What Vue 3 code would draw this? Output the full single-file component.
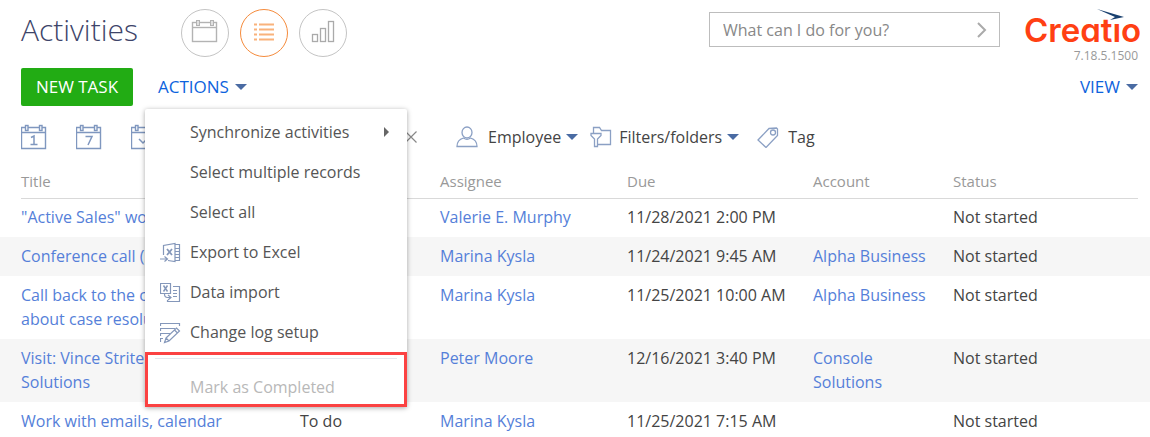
<script setup>
const columns = [
  { label: 'Title', cls: 'c-title' },
  { label: '', cls: 'c-type' },
  { label: 'Assignee', cls: 'c-owner' },
  { label: 'Due', cls: 'c-due' },
  { label: 'Account', cls: 'c-account' },
  { label: 'Status', cls: 'c-status' },
]
const rows = [
  { title: '"Active Sales" workshop', type: '', owner: 'Valerie E. Murphy', due: '11/28/2021 2:00 PM', account: '', status: 'Not started' },
  { title: 'Conference call (Skype)', type: '', owner: 'Marina Kysla', due: '11/24/2021 9:45 AM', account: 'Alpha Business', status: 'Not started' },
  { title: 'Call back to the customer about case resolution', type: '', owner: 'Marina Kysla', due: '11/25/2021 10:00 AM', account: 'Alpha Business', status: 'Not started' },
  { title: 'Visit: Vince Striter, Console Solutions', type: '', owner: 'Peter Moore', due: '12/16/2021 3:40 PM', account: 'Console Solutions', status: 'Not started' },
  { title: 'Work with emails, calendar', type: 'To do', owner: 'Marina Kysla', due: '11/25/2021 7:15 AM', account: '', status: 'Not started' },
]
</script>

<template>
  <div class="page">
    <header class="top">
      <h1>Activities</h1>
      <nav class="modes">
        <button class="mode" aria-label="Calendar">
          <svg width="46" height="46" viewBox="0 0 46 46" fill="none" stroke="#b3b3b3">
            <rect x="10.5" y="12.5" width="24" height="19" stroke-width="1.4" />
            <path d="M10.5 17.5h24" stroke-width="1.4" />
            <rect x="14.5" y="10.5" width="3" height="5" fill="#e0e0e0" />
            <rect x="28.5" y="10.5" width="3" height="5" fill="#e0e0e0" />
          </svg>
        </button>
        <button class="mode active" aria-label="List">
          <svg width="46" height="46" viewBox="0 0 46 46" stroke="#f9b27b" stroke-width="2">
            <path d="M13 14.5h3M18 14.5h15M13 19.5h3M18 19.5h15M13 24.5h3M18 24.5h15M13 29.5h3M18 29.5h15" />
          </svg>
        </button>
        <button class="mode" aria-label="Analytics">
          <svg width="46" height="46" viewBox="0 0 46 46" fill="none" stroke="#aaa" stroke-width="1.3">
            <rect x="12.5" y="24.5" width="5" height="7" />
            <rect x="20.5" y="18.5" width="5" height="13" />
            <rect x="28.5" y="11.5" width="5" height="20" />
          </svg>
        </button>
      </nav>
      <form class="command" @submit.prevent>
        <input type="text" aria-label="Command line" placeholder="What can I do for you?" />
        <button aria-label="Run">
          <svg width="12" height="16" viewBox="0 0 12 16" fill="none" stroke="#aaa" stroke-width="2"><path d="M2 1l7 7-7 7" /></svg>
        </button>
      </form>
      <div class="brand">
        <div class="logo">Creatio
          <svg class="bird" width="30" height="14" viewBox="0 0 30 14">
            <path d="M15 8h9v5h-9z" fill="#fff" />
            <path d="M1 0L28 8 14 11 19 8z" fill="#19406f" />
          </svg>
        </div>
        <div class="version">7.18.5.1500</div>
      </div>
    </header>

    <div class="commands">
      <button class="new">NEW TASK</button>
      <div class="menu-wrap">
        <button class="link-btn">ACTIONS <i class="caret"></i></button>
        <ul class="menu">
          <li><button>Synchronize activities <i class="sub"></i></button></li>
          <li><button>Select multiple records</button></li>
          <li><button>Select all</button></li>
          <li><button>
            <svg class="ico" width="22" height="22" viewBox="0 0 22 22" fill="none" stroke="#8497ba" stroke-width="1.2">
              <path d="M3.500 13V3.500L15 1.500v18L8 18.500M15 2.500h4.500v16H15M15 6.500h4M15 9.500h4M15 12.500h4M15 15.500h4M0 17h7M4.500 14.500L7.500 17l-3 2.500" />
              <path d="M7 7l5 6M12 7l-5 6" stroke-width="1.800" />
            </svg>Export to Excel</button></li>
          <li><button>
            <svg class="ico" width="22" height="22" viewBox="0 0 22 22" fill="none" stroke="#8497ba" stroke-width="1.2">
              <path d="M.5 1.500h10v10H.5zM13 4.500h6.500v15h-12V18M13 8.500h4M13 11.500h4M13 14.500h4M4.500 12c0 2.500 1 3.500 3 3.500h3M8 13l3 2.500L8 18" />
              <path d="M3.500 3.500l4 6M7.500 3.500l-4 6" stroke-width="1.500" />
            </svg>Data import</button></li>
          <li><button>
            <svg class="ico" width="22" height="22" viewBox="0 0 22 22" fill="none" stroke="#8497ba" stroke-width="1.2">
              <path d="M.5 4V1.500h19V4M.5 9V6.500H15M.5 14v-2.500H10M.5 20v-3.500H3M6 16L16.500 6l3 3L9 19 4.500 20.500zM6 16l3 3M14.500 8l3 3" />
            </svg>Change log setup</button></li>
          <li class="marked"><hr /><button disabled>Mark as Completed</button></li>
        </ul>
      </div>
      <button class="link-btn view">VIEW <i class="caret"></i></button>
    </div>

    <div class="filters">
      <button v-for="d in ['1', '7', 'v']" :key="d" class="day" :aria-label="d === 'v' ? 'Period' : d">
        <svg width="26" height="26" viewBox="0 0 26 26" fill="none" stroke="#7f97bf" stroke-width="1.4">
          <path d="M4 3.500H.5v21h24v-21H21M7 3.500h11M.5 8.500h24" />
          <rect x="4.500" y="1.500" width="2.500" height="5" /><rect x="18.500" y="1.500" width="2.500" height="5" />
          <path v-if="d === '1'" d="M10 13.500l3-1.500v8.500M9.500 20.500h7" stroke-width="1.500" />
          <path v-else-if="d === '7'" d="M9.500 12.500h6.500l-4 8.500" stroke-width="1.500" />
          <path v-else d="M8 15l4 4 6-6" stroke-width="1.500" />
        </svg>
      </button>
      <button class="clear" aria-label="Clear period">
        <svg width="12" height="12" viewBox="0 0 12 12" stroke="#888" stroke-width="1.200"><path d="M.5.5l11 11M11.500.5l-11 11" /></svg>
      </button>
      <button class="filter employee">
        <svg width="22" height="22" viewBox="0 0 22 22" fill="none" stroke="#8ba0c4" stroke-width="1.300">
          <ellipse cx="11" cy="6.500" rx="5" ry="5.500" /><path d="M1 20.500c0-5 3-7.500 6.500-8.500 2 1.500 5 1.500 7 0 3.500 1 6.500 3.500 6.500 8.500z" />
        </svg>Employee<i class="caret"></i>
      </button>
      <button class="filter folders">
        <svg width="22" height="22" viewBox="0 0 22 22" fill="none" stroke="#8ba0c4" stroke-width="1.300">
          <path d="M3.500 7V1.500h6l2 3h9v14h-13M1 7.500h10v2L7.500 13v7.500h-3V13L1 9.500z" />
        </svg>Filters/folders<i class="caret"></i>
      </button>
      <button class="filter tag">
        <svg width="22" height="22" viewBox="0 0 22 22" fill="none" stroke="#8ba0c4" stroke-width="1.300">
          <path d="M1 14L12 2.500l7.500-.5 1 1V9.500L9 21.500z" /><circle cx="16" cy="6.500" r="2.500" />
        </svg>Tag
      </button>
    </div>

    <table>
      <thead>
        <tr><th v-for="c in columns" :key="c.cls" :class="c.cls">{{ c.label }}</th></tr>
      </thead>
      <tbody>
        <tr v-for="r in rows" :key="r.title">
          <td class="c-title"><a href="#">{{ r.title }}</a></td>
          <td>{{ r.type }}</td>
          <td><a href="#">{{ r.owner }}</a></td>
          <td>{{ r.due }}</td>
          <td><a v-if="r.account" href="#">{{ r.account }}</a></td>
          <td>{{ r.status }}</td>
        </tr>
      </tbody>
    </table>
  </div>
</template>

<style>
body { background: #fff; }
</style>

<style scoped>
* { box-sizing: border-box; }
.page { font-family: "Open Sans", "Noto Sans", sans-serif; font-size: 16px; line-height: 24px; color: #444; }
button { font: inherit; color: inherit; background: none; border: 0; padding: 0; margin: 0; display: flex; align-items: center; white-space: nowrap; }
svg { display: block; flex: none; }
.top { display: flex; align-items: flex-start; height: 68px; padding: 0 10px 0 21px; }
h1 { margin: 9px 0 0; width: 160px; font-size: 30px; line-height: 42px; font-weight: 300; color: #3d4469; }
.modes { display: flex; gap: 11px; margin-top: 9px; }
.mode { width: 48px; height: 48px; border: 1px solid #c4c4c4; border-radius: 50%; }
.mode.active { border-color: #f58b3c; }
.command { display: flex; align-items: center; width: 291px; height: 35px; margin: 12px 24px 0 auto; border: 1px solid #bdbdbd; padding: 0 11px 0 13px; }
.command input { flex: 1; min-width: 0; border: 0; outline: 0; padding: 0; background: none; font: inherit; color: #888; }
.command input::placeholder { color: #888; opacity: 1; }
.brand { width: 116px; margin-top: 8px; }
.logo { position: relative; height: 40px; line-height: 44px; font-family: Inter, Lato, sans-serif; font-feature-settings: "cv11"; font-size: 33px; font-weight: 600; color: #ff4013; white-space: nowrap; }
.bird { position: absolute; left: 72px; top: 1px; }
.version { font-size: 12px; line-height: 16px; color: #999; text-align: right; padding-right: 2px; }
.commands { display: flex; align-items: center; height: 38px; padding: 0 12px 0 21px; }
.new { width: 112px; height: 38px; justify-content: center; background: #22ac14; color: #fff; font-size: 17px; border-radius: 2px; }
.menu-wrap { position: relative; margin-left: 25px; }
.link-btn { color: #0d63dd; font-size: 17px; gap: 6px; }
.view { margin-left: auto; }
.caret { border: 6px solid transparent; border-top-color: #4a6ba3; border-bottom: 0; }
.menu { position: absolute; z-index: 2; left: -13px; top: 34px; width: 262px; margin: 0; padding: 3px 0 0; list-style: none; background: #fff; box-shadow: 0 1px 5px rgba(0, 0, 0, .35); border-radius: 2px; }
.menu button { position: relative; width: 100%; height: 40px; padding: 0 18px 0 45px; justify-content: space-between; color: #555; }
.ico { position: absolute; left: 15px; top: 10px; }
.sub { border: 5px solid transparent; border-left-color: #666; border-right: 0; }
.menu .marked { height: 55px; border: 3px solid #fb4242; padding-top: 3px; }
.marked hr { margin: 0 7px 10px; border: 0; border-top: 1px solid #e4e6ee; }
.menu .marked button { padding-left: 42px; height: 35px; color: #b8b8b8; }
.filters { display: flex; align-items: center; height: 62px; padding-left: 21px; color: #444; }
.day { width: 55px; }
.clear { margin-left: 219px; }
.filter svg { margin-right: 10px; }
.filter .caret { margin-left: 5px; }
.employee { margin-left: 39px; }
.folders { margin-left: 12px; }
.folders svg { margin-right: 7px; }
.tag { margin-left: 18px; }
.tag svg { margin-right: 9px; }
table { width: 100%; table-layout: fixed; border-collapse: collapse; }
th { position: relative; height: 30px; padding: 0 0 5px; text-align: left; vertical-align: middle; font-size: 15px; line-height: 20px; font-weight: 400; color: #999; }
th::after { content: ""; position: absolute; left: 0; right: 0; bottom: -1px; border-bottom: 1px solid #d9d9d9; }
th.c-title::after { left: 21px; }
th.c-status::after { right: 12px; }
th.c-title, td.c-title { padding-left: 21px; padding-right: 50px; }
.c-title { width: 300px; }
.c-type { width: 140px; }
.c-owner { width: 187px; }
.c-due { width: 186px; }
.c-account { width: 140px; }
td { padding: 7px 20px 8px 0; vertical-align: top; }
td:nth-child(4) { padding-right: 0; }
tbody tr:nth-child(even) { background: #f6f6f6; }
a { color: #557fd9; text-decoration: none; }
</style>
